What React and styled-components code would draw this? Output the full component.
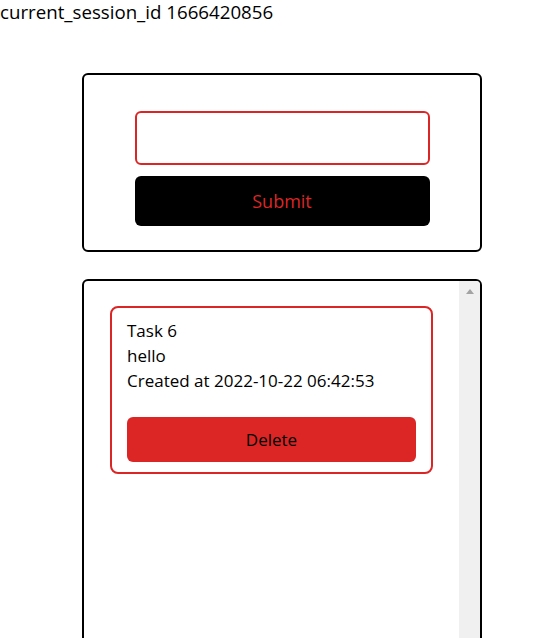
import React from "react";
import styled, { createGlobalStyle } from "styled-components";

const GlobalStyle = createGlobalStyle`
  body {
    margin: 0;
    background: #fff;
    font-family: "Open Sans", "Noto Sans", sans-serif;
    color: #000;
  }
`;

const SessionLine = styled.div`
  font-size: 18.7px;
  line-height: 22px;
  padding-top: 1px;
  height: 23px;
`;

const Main = styled.div`
  width: 400px;
  margin: 49px 0 0 82px;
  display: flex;
  flex-direction: column;
  gap: 27px;
`;

const Card = styled.div`
  box-sizing: border-box;
  border: 2px solid #000;
  border-radius: 6px;
  background: #fff;
`;

const FormCard = styled(Card)`
  height: 179px;
  padding: 36px 0 0;
  display: flex;
  flex-direction: column;
  align-items: center;
  gap: 11px;
`;

const TextInput = styled.input`
  box-sizing: border-box;
  width: 295px;
  height: 54px;
  border: 2px solid #dc2626;
  border-radius: 6px;
  outline: none;
  padding: 0 12px;
  font: inherit;
  font-size: 18px;
`;

const Button = styled.button`
  box-sizing: border-box;
  border: none;
  border-radius: 6px;
  font: inherit;
  font-size: ${(p) => p.$fs || 18}px;
  cursor: pointer;
  background: ${(p) => p.$bg};
  color: ${(p) => p.$fg};
  width: ${(p) => p.$w}px;
  height: ${(p) => p.$h}px;
`;

const ListCard = styled(Card)`
  height: 400px;
  display: flex;
  overflow: hidden;
`;

const ListBody = styled.div`
  flex: 1;
  padding-top: 25px;
`;

const ScrollTrack = styled.div`
  width: 21px;
  flex: none;
  background: #f0f0f0;
  display: flex;
  justify-content: center;
  padding-top: 8px;
  box-sizing: border-box;
`;

const ArrowUp = styled.div`
  width: 0;
  height: 0;
  border-left: 4.5px solid transparent;
  border-right: 4.5px solid transparent;
  border-bottom: 5px solid #a3a3a3;
`;

const TaskCard = styled.div`
  box-sizing: border-box;
  width: 323px;
  margin: 0 auto;
  border: 2px solid #dc2626;
  border-radius: 8px;
  padding: 10px 15px;
  font-size: 17px;
  line-height: 25px;
`;

const TaskLine = styled.div``;

const TaskActions = styled.div`
  margin-top: 24px;
  display: flex;
`;

const tasks = [
  {
    id: 6,
    title: "Task 6",
    body: "hello",
    created: "2022-10-22 06:42:53",
  },
];

export default function App() {
  return (
    <>
      <GlobalStyle />
      <SessionLine>current_session_id 1666420856</SessionLine>
      <Main>
        <FormCard>
          <TextInput type="text" />
          <Button $bg="#000" $fg="#dc2626" $w={295} $h={50}>
            Submit
          </Button>
        </FormCard>
        <ListCard>
          <ListBody>
            {tasks.map((task) => (
              <TaskCard key={task.id}>
                <TaskLine>{task.title}</TaskLine>
                <TaskLine>{task.body}</TaskLine>
                <TaskLine>Created at {task.created}</TaskLine>
                <TaskActions>
                  <Button $bg="#dc2626" $fg="#000" $w={289} $h={45} $fs={17}>
                    Delete
                  </Button>
                </TaskActions>
              </TaskCard>
            ))}
          </ListBody>
          <ScrollTrack>
            <ArrowUp />
          </ScrollTrack>
        </ListCard>
      </Main>
    </>
  );
}
